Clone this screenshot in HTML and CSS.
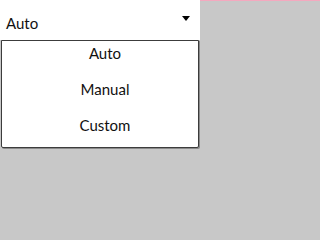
FILE: index.html
```html
<!DOCTYPE html>
<html>
<head>
<meta charset="utf-8">
<link rel="stylesheet" href="styles.css">
</head>
<body>
<div class="screen">
  <div class="topbar">
    <div class="select">
      <span class="value">Auto</span>
      <svg class="arrow" width="8" height="5" viewBox="0 0 8 5"><path d="M0 0H8L4 5Z" fill="#000"/></svg>
    </div>
    <div class="rest"></div>
  </div>
  <ul class="menu">
    <li>Auto</li>
    <li>Manual</li>
    <li>Custom</li>
  </ul>
</div>
</body>
</html>
```
FILE: styles.css
```css
html, body {
  margin: 0;
  padding: 0;
}
body {
  background: #c8c8c8;
  font-family: "Lato", "Noto Sans", sans-serif;
  color: #111;
}
.screen {
  position: relative;
  width: 320px;
  height: 240px;
  overflow: hidden;
}
.topbar {
  display: flex;
  height: 40px;
}
.select {
  width: 200px;
  height: 40px;
  background: #fff;
  display: flex;
  align-items: center;
  justify-content: space-between;
  padding: 6px 10px 0 6px;
  box-sizing: border-box;
}
.value {
  font-size: 15px;
}
.arrow {
  align-self: flex-start;
  margin-top: 10px;
}
.rest {
  flex: 1;
  border-top: 1px solid #f4a9bf;
}
.menu {
  position: absolute;
  left: 1px;
  top: 40px;
  width: 198px;
  margin: 0;
  padding: 4px 0 15px 10px;
  list-style: none;
  background: #fff;
  border: 1px solid #3c3c3c;
  border-radius: 0 0 2px 2px;
  box-shadow: 1px 1px 0 #8a8a8a;
  display: flex;
  flex-direction: column;
  gap: 20px;
  box-sizing: border-box;
  height: 108px;
}
.menu li {
  text-align: center;
  font-size: 15px;
  line-height: 16px;
}
```
